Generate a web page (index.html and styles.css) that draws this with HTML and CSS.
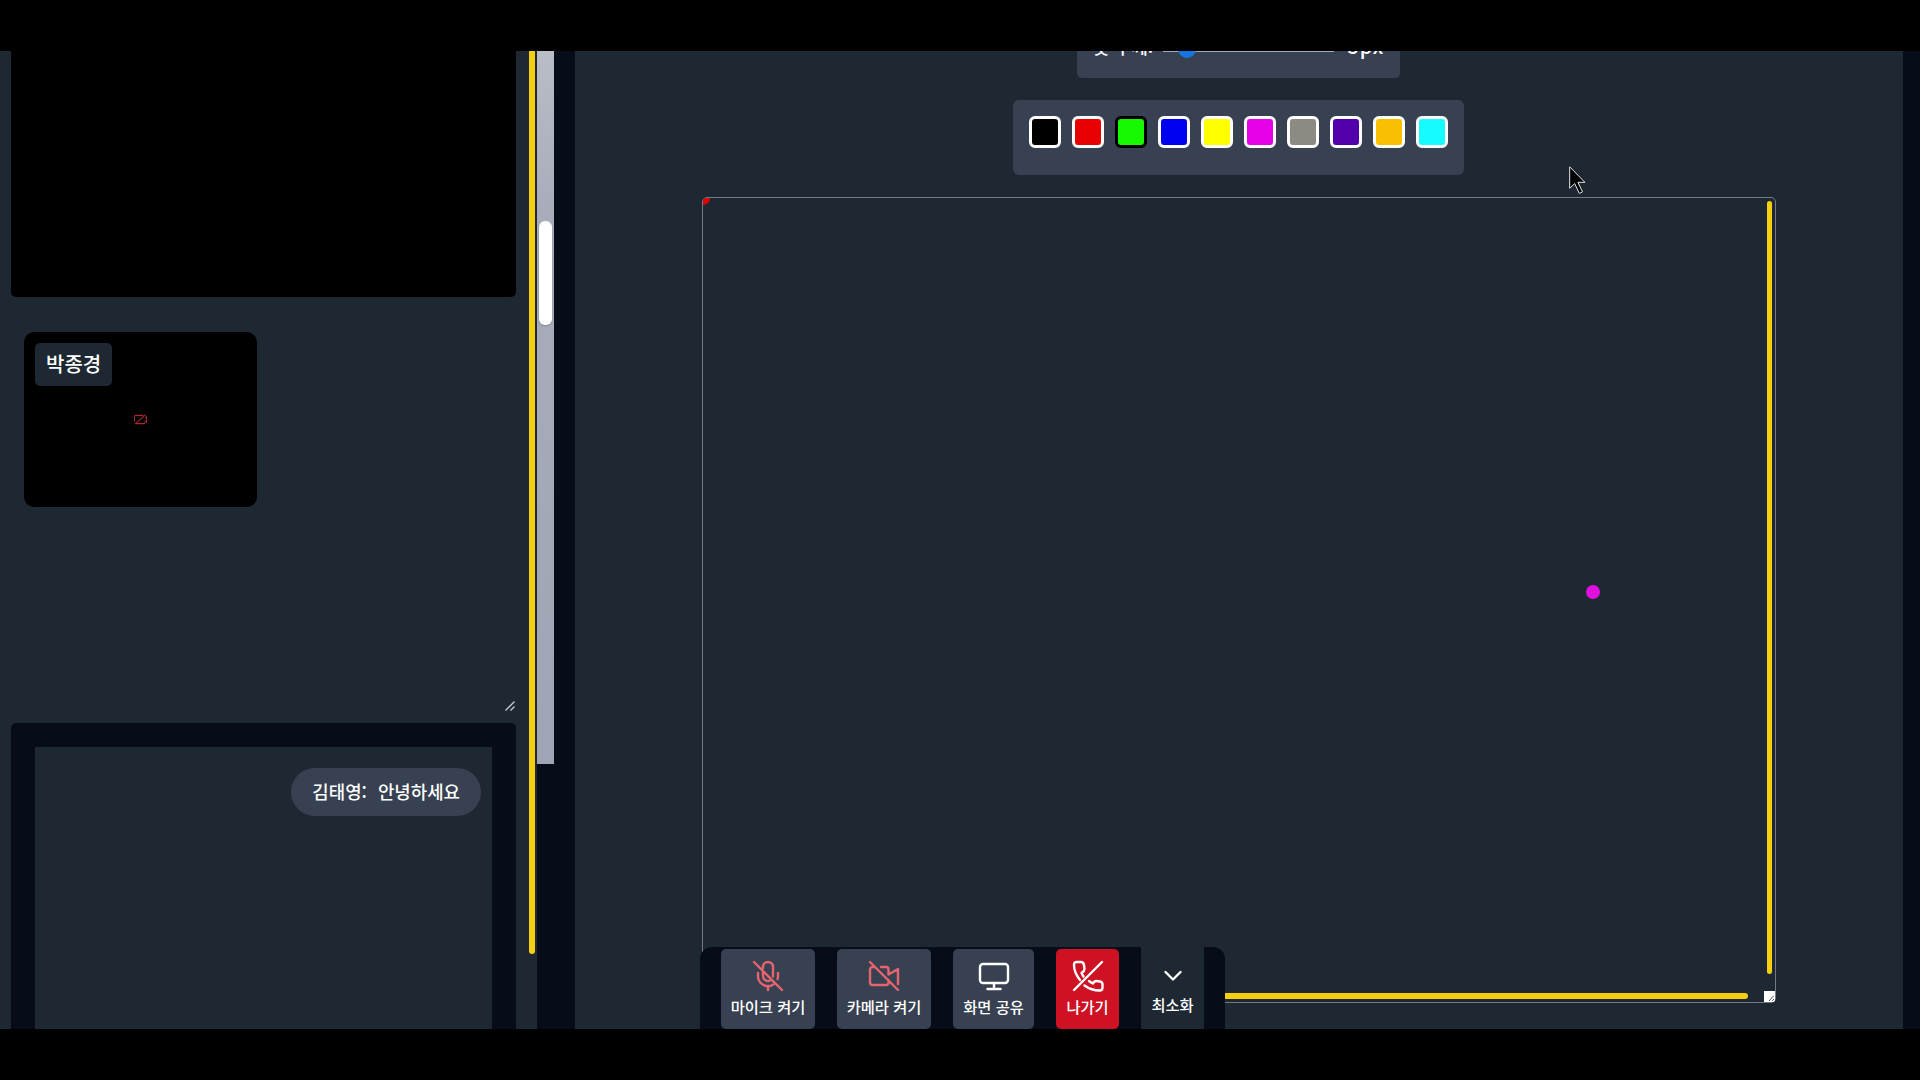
FILE: index.html
```html
<!DOCTYPE html>
<html lang="ko">
<head>
<meta charset="utf-8">
<title>화상 회의</title>
<link rel="stylesheet" href="styles.css">
</head>
<body>
<div class="screen">
  <aside class="side">
    <div class="side-content">
      <div class="main-video"></div>
      <div class="participants">
        <div class="participant">
          <span class="name">박종경</span>
          <svg class="cam-off" viewBox="0 0 16 12" fill="none" stroke="#a82c34" stroke-width="1.100"><path d="M3.500 10.500h8q1.500 0 1.500-1.500V7M11 1.500H3Q1.500 1.500 1.500 3v5.500M2 11 13.500.8M13 4l1.500-1v6.500"/></svg>
        </div>
        <svg class="grip" viewBox="0 0 10 10" stroke="#c9ccd1" stroke-width="1.300"><path d="M.5 9.500 9.500.5M5.500 9.500l4-4"/></svg>
      </div>
      <div class="chat">
        <div class="messages"><p class="bubble"><span>김태영:</span><span>안녕하세요</span></p></div>
      </div>
    </div>
    <div class="side-scroll"><div class="bar"></div></div>
  </aside>
  <div class="divider"><div class="track"><div class="thumb"></div></div></div>
  <main class="board">
    <div class="brush"><span>붓 두께:</span><div class="slider"><i></i></div><span class="px">5px</span></div>
    <div class="palette">
      <b class="black"></b><b class="red"></b><b class="green selected"></b><b class="blue"></b><b class="yellow"></b><b class="magenta"></b><b class="gray"></b><b class="purple"></b><b class="orange"></b><b class="cyan"></b>
    </div>
    <div class="canvas">
      <div class="canvas-row"><div class="stroke-area"><i class="red-mark"></i><i class="dot"></i></div><div class="vbar"></div></div>
      <div class="canvas-foot"><div class="hbar"></div><svg class="corner" viewBox="0 0 11 11"><path fill="#fff" d="M0 0h11v9q0 2-2 2H0z"/><path d="M5 10l4.500-5M8 10l2-2" stroke="#555" fill="none"/></svg></div>
    </div>
  </main>
  <nav class="controls">
    <button class="btn off"><svg viewBox="0 0 32 32"><path d="M2 2l28 28M11 8V7a5 5 0 0 1 10 0v9.500M11 11v5a5 5 0 0 0 7.500 4.300M6 13v3a10 10 0 0 0 16.500 7.600M26 13v3q0 1.500-.5 3M16 26v4"/></svg><span>마이크 켜기</span></button>
    <button class="btn off"><svg viewBox="0 0 32 32"><path d="M2 2l28 28M6 7H4.500A2.500 2.500 0 0 0 2 9.500v13A2.500 2.500 0 0 0 4.500 25H18a2.500 2.500 0 0 0 2.500-2.500V20M13 7h5a2.500 2.500 0 0 1 2.500 2.500v5L30 9v15"/></svg><span>카메라 켜기</span></button>
    <button class="btn share"><svg viewBox="0 0 32 32"><rect x="2" y="4" width="28" height="19" rx="3"/><path d="M16 23v6M9.500 29h13"/></svg><span>화면 공유</span></button>
    <button class="btn leave"><svg viewBox="0 0 32 32"><path d="M30 2 2 30M8 20C4 15 2 10 2 5q0-3 3-3h4q2.500 0 3 3l.5 4q0 2-3 4 1 2 2 3.500M17 21q2 1.500 4 2.500 1.500-3 4-2.500l3 .5q2.500.5 2.500 3v3q0 3-3 3-8 0-15-5"/></svg><span>나가기</span></button>
    <button class="btn mini"><svg viewBox="0 0 32 32"><path d="M8.500 12 16 19.500l7.500-7.500"/></svg><span>최소화</span></button>
  </nav>
  <svg class="cursor" viewBox="0 0 17 29"><path d="M.7.8v21.500l5-4.700 4.600 9.800 3.200-1.500-4.600-9.600h7z" fill="#000" stroke="#e5e5e5"/></svg>
</div>
</body>
</html>
```
FILE: styles.css
```css
* { box-sizing: border-box; }
body {
  margin: 0; height: 1080px; padding: 51px 0; overflow: hidden; background: #000; color: #fff;
  font-family: "Noto Sans CJK KR", sans-serif; font-weight: 500;
}
.screen { position: relative; height: 978px; display: flex; overflow: hidden; background: #060d19; }

.side { width: 537px; display: flex; background: #1e2833; }
.side-content { width: 529px; padding: 0 13px 0 11px; display: flex; flex-direction: column; }
.main-video { height: 246px; background: #000; border-radius: 0 0 5px 5px; }
.participants { height: 426px; padding: 35px 0 0 13px; display: flex; justify-content: space-between; }
.participant { width: 233px; height: 175px; background: #000; border-radius: 10px; padding: 11px; display: flex; flex-direction: column; }
.name { align-self: flex-start; height: 43px; line-height: 42px; padding: 0 11px; font-size: 20px; background: #1e2833; border-radius: 5px; }
.cam-off { width: 15px; height: 11px; margin: 28px 0 0 98px; }
.grip { width: 10px; height: 10px; align-self: flex-end; margin: 0 1px 12px 0; }
.chat { flex: 1; background: #060d19; border-radius: 5px 5px 0 0; padding: 24px 24px 0; display: flex; }
.messages { flex: 1; background: #1e2833; padding: 21px 11px 0; display: flex; justify-content: flex-end; align-items: flex-start; }
.bubble { margin: 0; height: 48px; padding: 0 21px; line-height: 46px; display: flex; gap: 11px; font-size: 17.85px; background: #374151; border-radius: 24px; white-space: nowrap; }
.side-scroll { width: 8px; }
.side-scroll .bar { width: 6px; height: 903px; background: #f6d010; border-radius: 0 0 3px 3px; }

.divider { width: 38px; }
.track { width: 17px; height: 713px; padding: 170px 2px 0; background: linear-gradient(#b9bdc5, #a9acbb 22%, #9fa5b5); }
.thumb { height: 104px; background: #fff; border-radius: 6px; box-shadow: 0 1px 2px #888; }

.board { width: 1328px; background: #1e2833; display: flex; flex-direction: column; align-items: center; }
.brush { width: 323px; height: 56px; margin: -29px 1px 0 0; padding: 0 16px; display: flex; gap: 10px; font-size: 18px; line-height: 49px; background: #374151; border-radius: 5px; white-space: nowrap; }
.slider { width: 172px; height: 2px; margin-top: 28px; background: #a5acb9; }
.slider i { display: block; width: 18px; height: 18px; margin: -10px 0 0 15px; border-radius: 50%; background: #1675e0; }
.px { margin-left: 4px; font-size: 20px; letter-spacing: .8px; line-height: 48px; }
.palette { width: 451px; height: 75px; margin: 22px 1px 0 0; padding: 16px; display: flex; gap: 11px; background: #374151; border-radius: 6px; }
.palette b { width: 32px; height: 32px; border: 3px solid #fff; border-radius: 6px; }
.palette .selected { border-color: #000; }
.black { background: #000; } .red { background: #e60000; } .green { background: #16f900; } .blue { background: #0000f0; }
.yellow { background: #ff0; } .magenta { background: #e800e8; } .gray { background: #8b8b83; }
.purple { background: #5200aa; } .orange { background: #f8c000; } .cyan { background: #16fbff; }
.canvas { width: 1074px; height: 806px; margin-top: 22px; border: 1px solid #737a86; border-radius: 5px; display: flex; flex-direction: column; }
.canvas-row { height: 793px; display: flex; }
.stroke-area { width: 1064px; position: relative; overflow: hidden; border-radius: 4px 0 0 0; }
.red-mark { position: absolute; left: -7px; top: -7px; width: 14px; height: 14px; border-radius: 50%; background: #e00000; }
.dot { position: absolute; left: 883px; top: 387px; width: 14px; height: 14px; border-radius: 50%; background: #e010de; }
.vbar { width: 5px; height: 773px; margin-top: 3px; background: #f6d010; border-radius: 3px; }
.canvas-foot { display: flex; justify-content: flex-end; gap: 16px; }
.hbar { width: 1040px; height: 6px; margin-top: 2px; background: #f6d010; border-radius: 3px; }
.corner { width: 11px; height: 11px; }

.controls { position: absolute; left: 700px; bottom: 0; width: 525px; height: 82px; padding: 0 21px; display: flex; justify-content: space-between; align-items: flex-end; background: #060d19; border-radius: 12px 12px 0 0; }
.btn { height: 80px; padding: 11px 0 0; width: 94px; border: 0; border-radius: 5px; background: #374151; color: #fff; font: inherit; font-size: 15.3px; line-height: 24px; display: flex; flex-direction: column; align-items: center; white-space: nowrap; }
.btn svg { width: 32px; height: 32px; margin-bottom: 2px; flex: none; fill: none; stroke: #fff; stroke-width: 2.4; stroke-linecap: round; stroke-linejoin: round; }
.off svg { stroke: #e6646e; }
.share { width: 81px; }
.leave { width: 63px; background: #ce1224; }
.mini { width: 63px; height: 82px; padding-top: 13px; border-radius: 0; background: #1e2833; }
.mini svg { margin-bottom: 0; }
.cursor { position: absolute; left: 1569px; top: 115px; width: 17px; height: 29px; }
```
